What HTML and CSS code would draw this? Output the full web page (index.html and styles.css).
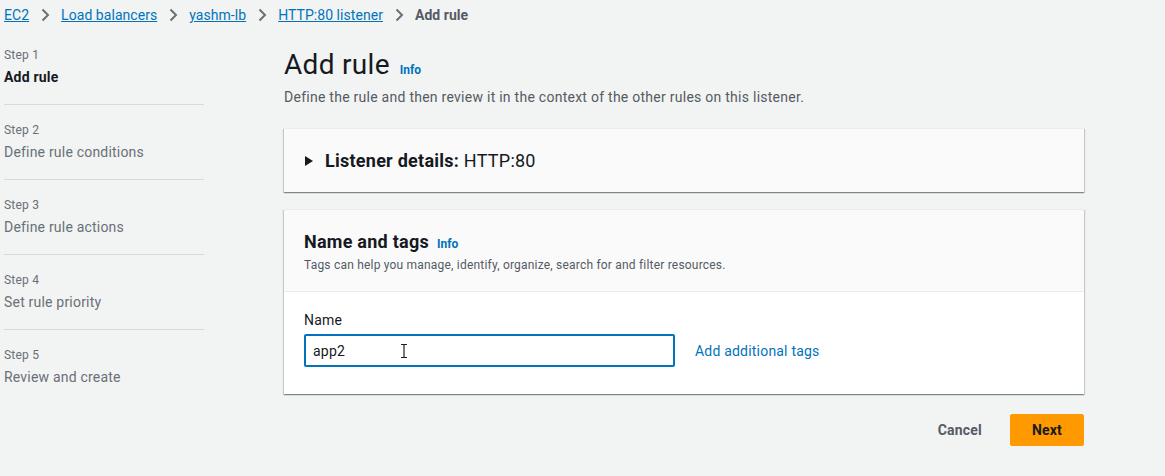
FILE: index.html
```html
<!DOCTYPE html>
<html>
<head>
<meta charset="utf-8">
<link rel="stylesheet" href="styles.css">
</head>
<body>
<nav class="crumbs">
  <a href="#">EC2</a>
  <svg class="chev" width="16" height="16" viewBox="0 0 16 16"><path d="M5.5 2.5 11 8l-5.5 5.5" fill="none" stroke="#687078" stroke-width="2"/></svg>
  <a href="#">Load balancers</a>
  <svg class="chev" width="16" height="16" viewBox="0 0 16 16"><path d="M5.5 2.5 11 8l-5.5 5.5" fill="none" stroke="#687078" stroke-width="2"/></svg>
  <a href="#">yashm-lb</a>
  <svg class="chev" width="16" height="16" viewBox="0 0 16 16"><path d="M5.5 2.5 11 8l-5.5 5.5" fill="none" stroke="#687078" stroke-width="2"/></svg>
  <a href="#">HTTP:80 listener</a>
  <svg class="chev" width="16" height="16" viewBox="0 0 16 16"><path d="M5.5 2.5 11 8l-5.5 5.5" fill="none" stroke="#687078" stroke-width="2"/></svg>
  <span class="current">Add rule</span>
</nav>
<div class="layout">
  <ol class="steps">
    <li class="step active"><span class="num">Step 1</span><span class="label">Add rule</span></li>
    <li class="step"><span class="num">Step 2</span><span class="label">Define rule conditions</span></li>
    <li class="step"><span class="num">Step 3</span><span class="label">Define rule actions</span></li>
    <li class="step"><span class="num">Step 4</span><span class="label">Set rule priority</span></li>
    <li class="step last"><span class="num">Step 5</span><span class="label">Review and create</span></li>
  </ol>
  <main class="main">
    <div class="title-row"><h1>Add rule</h1><a class="info" href="#">Info</a></div>
    <p class="desc">Define the rule and then review it in the context of the other rules on this listener.</p>
    <section class="card listener">
      <svg class="caret" width="10" height="12" viewBox="0 0 10 12"><path d="M1 1l8 5-8 5z" fill="#16191f"/></svg>
      <h2><b>Listener details:</b> HTTP:80</h2>
    </section>
    <section class="card tags">
      <header class="card-head">
        <div class="title-row small"><h2><b>Name and tags</b></h2><a class="info" href="#">Info</a></div>
        <p class="sub">Tags can help you manage, identify, organize, search for and filter resources.</p>
      </header>
      <div class="card-body">
        <label class="field-label">Name</label>
        <div class="field-row">
          <div class="input"><span>app2</span>
            <svg class="ibeam" width="8" height="16" viewBox="0 0 8 16"><path d="M1 1.5h6M1 14.5h6M4 1.5v13" fill="none" stroke="#fff" stroke-width="3"/><path d="M1 1.5h6M1 14.5h6M4 1.5v13" fill="none" stroke="#222" stroke-width="1.2"/></svg>
          </div>
          <a class="add-tags" href="#">Add additional tags</a>
        </div>
      </div>
    </section>
    <div class="actions">
      <button class="cancel">Cancel</button>
      <button class="next">Next</button>
    </div>
  </main>
</div>
</body>
</html>
```
FILE: styles.css
```css
* { box-sizing: border-box; }
html, body { margin: 0; padding: 0; }
body {
  background: #f2f3f3;
  font-family: Roboto, "Open Sans", Arial, sans-serif;
  color: #16191f;
  font-size: 14px;
  letter-spacing: 0.2px;
  width: 1165px;
  height: 476px;
  overflow: hidden;
}
a { color: #0073bb; }
.crumbs {
  display: flex;
  align-items: center;
  height: 30px;
  padding: 0 0 0 4px;
  gap: 8px;
  font-size: 14px;
  letter-spacing: 0.05px;
}
.crumbs a { text-decoration: underline; color: #0073bb; }
.crumbs .current { color: #545b64; font-weight: 700; }
.layout {
  display: flex;
  padding-top: 17px;
}
.steps {
  list-style: none;
  margin: 0;
  padding: 0 0 0 4px;
  width: 284px;
  flex-shrink: 0;
}
.step {
  width: 200px;
  display: flex;
  flex-direction: column;
  border-bottom: 1px solid #d5dbdb;
  padding: 17px 0 17px;
}
.step:first-child { padding-top: 0; }
.step.last { border-bottom: none; }
.step .num { font-size: 12px; color: #687078; line-height: 16px; }
.step .label { font-size: 14px; color: #687078; line-height: 20px; margin-top: 4px; }
.step.active .label { color: #16191f; font-weight: 700; }
.main { width: 800px; }
.title-row { display: flex; align-items: baseline; gap: 10px; }
h1 { margin: 0; font-size: 28px; font-weight: 400; line-height: 36px; color: #16191f; letter-spacing: 0.3px; }
.info { font-size: 12px; font-weight: 700; text-decoration: none; color: #0073bb; letter-spacing: 0; }
.desc { margin: 4px 0 0; font-size: 14px; line-height: 20px; color: #545b64; letter-spacing: 0.26px; }
.card {
  background: #fafafa;
  border-top: 1px solid #eaeded;
  box-shadow: 0 1px 1px 0 rgba(0,28,36,.3), 1px 1px 1px 0 rgba(0,28,36,.15), -1px 1px 1px 0 rgba(0,28,36,.15);
}
.listener {
  margin-top: 21px;
  height: 64px;
  display: flex;
  align-items: center;
  padding-left: 20px;
  gap: 11px;
}
h2 { margin: 0; font-size: 18px; font-weight: 400; line-height: 24px; letter-spacing: 0.25px; }
.tags { margin-top: 17px; }
.card-head {
  padding: 20px 20px 18px;
  border-bottom: 1px solid #eaeded;
}
.title-row.small { gap: 8px; }
.sub { margin: 3px 0 0; font-size: 12px; line-height: 16px; color: #545b64; }
.card-body {
  background: #fff;
  padding: 18px 20px 27px;
}
.field-label { display: block; font-size: 14px; line-height: 20px; margin-bottom: 4px; }
.field-row { display: flex; align-items: center; gap: 20px; }
.input {
  position: relative;
  width: 371px;
  height: 33px;
  border: 2px solid #0073bb;
  border-radius: 2px;
  background: #fff;
  display: flex;
  align-items: center;
  padding-left: 7px;
  font-size: 14px;
}
.ibeam { position: absolute; left: 94px; top: 7px; }
.add-tags { text-decoration: none; font-size: 14px; }
.actions {
  display: flex;
  justify-content: flex-end;
  align-items: center;
  margin-top: 20px;
  gap: 8px;
}
button { font-family: inherit; font-size: 14px; font-weight: 700; border-radius: 2px; cursor: pointer; letter-spacing: 0.2px; }
.cancel { background: none; border: none; color: #545b64; padding: 0 20px; height: 32px; }
.next { background: #ff9900; border: 1px solid #ff9900; color: #16191f; width: 74px; height: 32px; }
```
